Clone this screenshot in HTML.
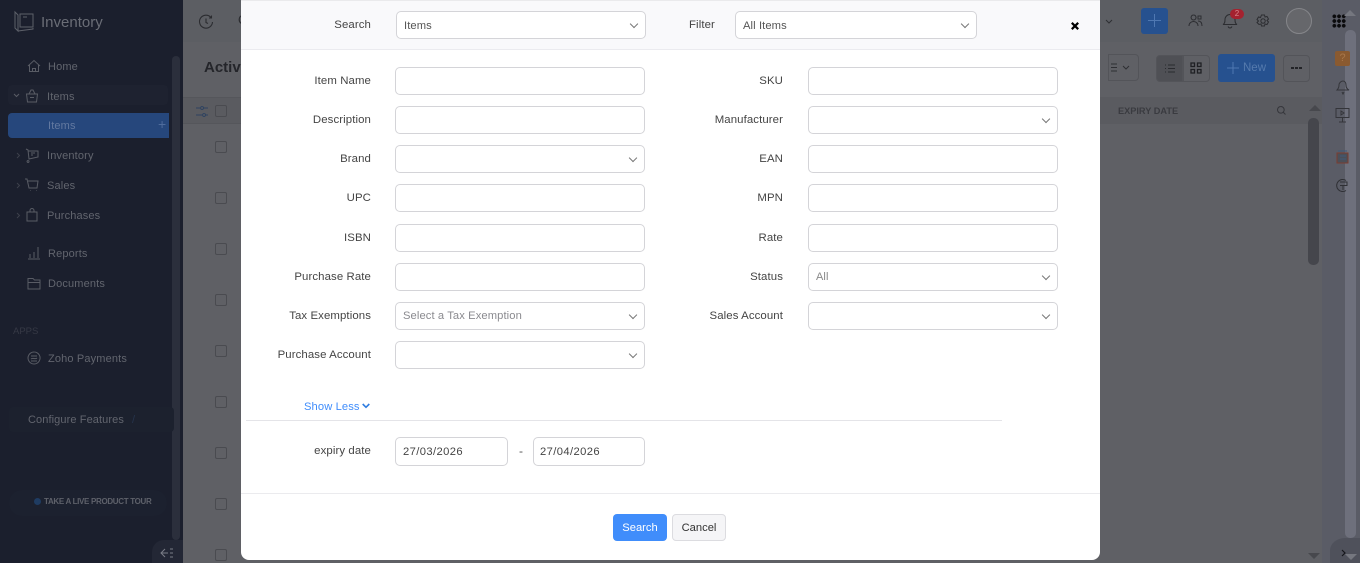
<!DOCTYPE html>
<html><head><meta charset="utf-8"><title>Inventory</title>
<style>
*{box-sizing:border-box}
html,body{margin:0;padding:0;width:1360px;height:563px;overflow:hidden;background:#5f6065;font-family:"Liberation Sans",sans-serif;font-size:12px}
.a{position:absolute}
.t{position:absolute;white-space:nowrap;line-height:14px}
.nav{color:#62656e;font-size:11px;letter-spacing:.15px;margin-top:1px}
.cb{position:absolute;left:215px;width:12px;height:12px;border:1px solid #4a4b50;border-radius:2px}
.lb{position:absolute;white-space:nowrap;text-align:right;color:#444;font-size:11.4px;line-height:14px;letter-spacing:.1px;margin-top:2px}
.l1{right:989px}.l2{right:577px}
.in{position:absolute;width:250px;height:28px;border:1px solid #d4d4d8;border-radius:5px;background:#fff;color:#555;font-size:11.2px;line-height:28px;padding-left:7px;letter-spacing:.1px}
.c1{left:395px}.c2{left:808px}
.sel:after{content:"";position:absolute;right:8px;top:9px;width:5px;height:5px;border-right:1.3px solid #777;border-bottom:1.3px solid #777;transform:rotate(45deg)}
svg{position:absolute;overflow:visible;fill:none}
</style></head><body>

<!-- background page -->
<div class="a" style="left:183px;top:0;width:1058px;height:42px;background:#5c5e63"></div>
<div class="a" style="left:1100px;top:0;width:230px;height:42px;background:#5c5e63"></div>
<div class="a" style="left:1322px;top:0;width:38px;height:563px;background:#5a5c66"></div>
<div class="a" style="left:1100px;top:97px;width:222px;height:27px;background:#5a5b60"></div>
<div class="a" style="left:183px;top:97px;width:58px;height:27px;background:#5a5b60"></div>

<!-- sidebar -->
<div class="a" style="left:0;top:0;width:183px;height:563px;background:#1b1f2d"></div>
<div class="a" style="left:172px;top:56px;width:8px;height:484px;background:#2b2f3c;border-radius:4px"></div>
<div class="a" style="left:8px;top:85px;width:160px;height:20px;background:#1e2230;border-radius:4px"></div>
<div class="a" style="left:8px;top:113px;width:161px;height:25px;background:#26477c;border-radius:4px 0 0 4px"></div>
<div class="a" style="left:9px;top:407px;width:165px;height:25px;background:#1c212e;border-radius:4px"></div>
<div class="a" style="left:9px;top:490px;width:158px;height:26px;background:#1c212f;border-radius:13px"></div>
<div class="a" style="left:152px;top:540px;width:31px;height:23px;background:#232735;border-radius:12px 0 0 0"></div>

<svg style="left:14px;top:11px" width="22" height="22" viewBox="0 0 22 22" stroke="#5d6069" stroke-width="1"><path d="M1 1l3 3v16l-3-3zM4 20l15-2v-1M6 3h13v13H6zM9 6h4"/></svg>
<div class="t" style="left:41px;top:14px;color:#6a6d76;font-size:15px;line-height:17px">Inventory</div>

<svg style="left:27px;top:59px" width="14" height="14" viewBox="0 0 14 14" stroke="#595c65"><path d="M1 7l6-5.500 6 5.500M2.500 6v6.500h9V6M5.500 12.500v-3h3v3"/></svg>
<div class="t nav" style="left:48px;top:59px">Home</div>
<svg style="left:13px;top:92px" width="7" height="7" viewBox="0 0 7 7" stroke="#595c65"><path d="M1 2l2.500 2.500L6 2"/></svg>
<svg style="left:25px;top:89px" width="14" height="14" viewBox="0 0 14 14" stroke="#595c65"><path d="M1.500 5h11l-1 8h-9zM4 5l2-4h2l2 4M5 8.500h4"/></svg>
<div class="t nav" style="left:47px;top:89px">Items</div>
<div class="t nav" style="left:48px;top:118px;color:#6379a0">Items</div>
<div class="t" style="left:158px;top:117px;color:#4f6c9c;font-size:14px">+</div>

<svg style="left:15px;top:152px" width="6" height="7" viewBox="0 0 6 7" stroke="#3d404b"><path d="M2 1l2.500 2.500L2 6"/></svg>
<svg style="left:25px;top:148px" width="14" height="14" viewBox="0 0 14 14" stroke="#595c65"><path d="M1 1l2 1 1 9 9-2V3H3M3 12.500a1 1 0 1 0 .1 0M6 5h4M6 7h2"/></svg>
<div class="t nav" style="left:47px;top:148px">Inventory</div>
<svg style="left:15px;top:182px" width="6" height="7" viewBox="0 0 6 7" stroke="#3d404b"><path d="M2 1l2.500 2.500L2 6"/></svg>
<svg style="left:25px;top:178px" width="14" height="14" viewBox="0 0 14 14" stroke="#595c65"><path d="M0 1h2l2 9h8l1-7H3M5 12.500h.5M11 12.500h.5"/></svg>
<div class="t nav" style="left:47px;top:178px">Sales</div>
<svg style="left:15px;top:212px" width="6" height="7" viewBox="0 0 6 7" stroke="#3d404b"><path d="M2 1l2.500 2.500L2 6"/></svg>
<svg style="left:25px;top:208px" width="14" height="14" viewBox="0 0 14 14" stroke="#595c65"><path d="M2 4h10v9H2zM5 4V2.500a2 2 0 0 1 4 0V4"/></svg>
<div class="t nav" style="left:47px;top:208px">Purchases</div>
<svg style="left:27px;top:246px" width="14" height="14" viewBox="0 0 14 14" stroke="#595c65"><path d="M1 13h12M3 12V8M7 12V6M11 12V1"/></svg>
<div class="t nav" style="left:48px;top:246px">Reports</div>
<svg style="left:27px;top:276px" width="14" height="14" viewBox="0 0 14 14" stroke="#595c65"><path d="M1 4V2.500h5L7.500 4H13v9H1zM1 6.500h12"/></svg>
<div class="t nav" style="left:48px;top:276px">Documents</div>
<div class="t" style="left:13px;top:325px;color:#363945;font-size:9.500px">APPS</div>
<svg style="left:27px;top:351px" width="14" height="14" viewBox="0 0 14 14" stroke="#595c65"><path d="M7 1a6 6 0 1 0 .1 0M4 5h6M4 8c2-2 4 1 6-1M4 10h6"/></svg>
<div class="t nav" style="left:48px;top:351px">Zoho Payments</div>
<div class="t nav" style="left:28px;top:412px;letter-spacing:.1px">Configure Features</div>
<div class="t" style="left:132px;top:413px;color:#26344d;font-size:11px">/</div>
<div class="a" style="left:34px;top:498px;width:7px;height:7px;border-radius:50%;background:#1f3c62"></div>
<div class="t" style="left:44px;top:495px;color:#5e616a;font-size:8px;font-weight:bold;letter-spacing:-.32px">TAKE A LIVE PRODUCT TOUR</div>
<svg style="left:160px;top:547px" width="14" height="12" viewBox="0 0 14 12" stroke="#7a7d86"><path d="M5 2L1 6l4 4M1 6h7M10 2h3M10 6h3M10 10h3"/></svg>

<!-- page behind modal left -->
<svg style="left:198px;top:14px" width="16" height="16" viewBox="0 0 16 16" stroke="#2b2c30" stroke-width="1.100"><path d="M13 3.500A6.500 6.500 0 1 0 14.500 8M13.500 1.500v2.500H11M8 4.500V8.500l2 1"/></svg>
<div class="t" style="left:238px;top:13px;color:#2b2c30;font-size:13px">Q</div>
<div class="t" style="left:204px;top:59px;color:#24252a;font-size:15px;font-weight:bold;line-height:18px">Active</div>
<svg style="left:196px;top:105px" width="12" height="13" viewBox="0 0 12 13" stroke="#2d4260"><path d="M0 3h4M8 3h4M0 10h6M10 10h2M6 1.500a1.500 1.500 0 1 0 .1 0M8 8.500a1.500 1.500 0 1 0 .1 0"/></svg>
<div class="cb" style="top:105px"></div>
<div class="a" style="left:183px;top:97px;width:58px;height:1px;background:#55565b"></div>
<div class="a" style="left:183px;top:123px;width:58px;height:1px;background:#55565b"></div>
<div class="cb" style="top:141px"></div><div class="cb" style="top:192px"></div><div class="cb" style="top:243px"></div><div class="cb" style="top:294px"></div><div class="cb" style="top:345px"></div><div class="cb" style="top:396px"></div><div class="cb" style="top:447px"></div><div class="cb" style="top:498px"></div><div class="cb" style="top:549px"></div>

<!-- page right of modal -->
<svg style="left:1105px;top:19px" width="8" height="6" viewBox="0 0 8 6" stroke="#2e2f33"><path d="M1 1l3 3 3-3"/></svg>
<div class="a" style="left:1141px;top:8px;width:27px;height:26px;background:#26518f;border-radius:3px"></div>
<svg style="left:1148px;top:14px" width="13" height="13" viewBox="0 0 13 13" stroke="#4f78b2"><path d="M6.500 0v13M0 6.500h13"/></svg>
<svg style="left:1188px;top:14px" width="15" height="14" viewBox="0 0 15 14" stroke="#2c2d31"><path d="M5.500 1a2.500 2.500 0 1 0 .1 0M1 12c0-6 9-6 9 0M10 2h3v3h-3zM10 7c2 0 4 1 4 5"/></svg>
<svg style="left:1222px;top:13px" width="16" height="16" viewBox="0 0 16 16" stroke="#2c2d31"><path d="M1 11.500c2-1 2-3 2-5a5 5 0 0 1 10 0c0 2 0 4 2 5zM6 13.500c1 2 3 2 4 0"/></svg>
<div class="a" style="left:1230px;top:9px;width:14px;height:10px;border-radius:5px;background:#a4222f;color:#d8868d;font-size:8px;line-height:10px;text-align:center">2</div>
<svg style="left:1256px;top:14px" width="14" height="14" viewBox="0 0 14 14" stroke="#2c2d31"><path d="M5.500 1h3l.5 2 2-.5 1.500 2.500-1.500 1.500 1.500 1.500-1.500 2.500-2-.5-.5 2h-3l-.5-2-2 .5L1 8.500 2.500 7 1 5.500 2.500 3l2 .5zM7 4.800a2.200 2.200 0 1 0 .1 0"/></svg>
<div class="a" style="left:1286px;top:8px;width:26px;height:26px;border-radius:50%;background:#66676b;border:1px solid #85868a"></div>
<div class="a" style="left:1332px;top:14px;width:14px;height:14px;background-image:radial-gradient(circle,#0b0b0d 1.800px,transparent 2px);background-size:4.700px 4.700px"></div>
<div class="a" style="left:1108px;top:54px;width:31px;height:27px;border:1px solid #535459;border-radius:0 4px 4px 0"></div>
<svg style="left:1110px;top:63px" width="25" height="9" viewBox="0 0 25 9" stroke="#2e2f33"><path d="M1 1h6M1 4.500h6M1 8h6M13 3l3 3 3-3"/></svg>
<div class="a" style="left:1156px;top:55px;width:27px;height:27px;background:#4f5055;border:1px solid #535459;border-radius:4px 0 0 4px"></div>
<svg style="left:1165px;top:64px" width="10" height="9" viewBox="0 0 10 9" stroke="#2a2b2f"><path d="M0 1h1M3 1h7M0 4.500h1M3 4.500h7M0 8h1M3 8h7"/></svg>
<div class="a" style="left:1183px;top:55px;width:27px;height:27px;background:#5f6065;border:1px solid #535459;border-radius:0 4px 4px 0"></div>
<svg style="left:1190px;top:62px" width="12" height="12" viewBox="0 0 12 12" stroke="#1f2024" stroke-width="1.300"><path d="M1 1h3.500v3.500H1zM7.500 1H11v3.500H7.500zM1 7.500h3.500V11H1zM7.500 7.500H11V11H7.500z"/></svg>
<div class="a" style="left:1218px;top:54px;width:57px;height:28px;background:#26518f;border-radius:3px"></div>
<svg style="left:1227px;top:62px" width="12" height="12" viewBox="0 0 12 12" stroke="#4f78b2"><path d="M6 0v12M0 6h12"/></svg>
<div class="t" style="left:1243px;top:61px;color:#557aad;font-size:11.500px">New</div>
<div class="a" style="left:1283px;top:55px;width:27px;height:27px;border:1px solid #535459;border-radius:4px"></div>
<div class="a" style="left:1291px;top:67px;width:3px;height:2px;background:#232428"></div><div class="a" style="left:1295px;top:67px;width:3px;height:2px;background:#232428"></div><div class="a" style="left:1299px;top:67px;width:3px;height:2px;background:#232428"></div>
<div class="t" style="left:1118px;top:104px;color:#3a3b40;font-size:9.200px;font-weight:bold">EXPIRY DATE</div>
<svg style="left:1277px;top:106px" width="9" height="9" viewBox="0 0 9 9" stroke="#35363b"><path d="M3.800.5a3.300 3.300 0 1 0 .1 0M6 6l2.500 2.500"/></svg>
<div class="a" style="left:1308px;top:118px;width:11px;height:147px;background:#45464c;border-radius:5px"></div>
<div class="a" style="left:1309px;top:105px;border:6px solid transparent;border-top:0;border-bottom:6px solid #47484d"></div>
<div class="a" style="left:1308px;top:553px;border:6px solid transparent;border-bottom:0;border-top:6px solid #47484d"></div>
<div class="a" style="left:1345px;top:30px;width:11px;height:508px;background:#6e707c;border-radius:5px"></div>
<div class="a" style="left:1344px;top:10px;border:6px solid transparent;border-top:0;border-bottom:6px solid #75777f"></div>
<div class="a" style="left:1330px;top:538px;width:30px;height:25px;background:#4f515b;border-radius:50% 0 0 0"></div>
<div class="a" style="left:1345px;top:554px;border:6px solid transparent;border-bottom:0;border-top:6px solid #75777f"></div>
<svg style="left:1341px;top:549px" width="6" height="8" viewBox="0 0 6 8" stroke="#15161a" stroke-width="1.200"><path d="M1 1l3 3-3 3"/></svg>
<div class="a" style="left:1335px;top:51px;width:15px;height:15px;background:#8a5a30;border-radius:2px;color:#a8774a;font-size:11px;line-height:15px;text-align:center">?</div>
<svg style="left:1336px;top:80px" width="14" height="15" viewBox="0 0 14 15" stroke="#34353a"><path d="M1 10c1-1 2-3 2-5s2-4 4-4 3 2 3 4 1 4 3 5zM6 12l1 2 1-2"/></svg>
<svg style="left:1335px;top:107px" width="15" height="16" viewBox="0 0 15 16" stroke="#34353a"><path d="M1 1.500h13v9H1zM7.500 10.500V15M4 15h7M6 4l3 2-3 2z"/></svg>
<svg style="left:1335px;top:149px" width="14" height="15" viewBox="0 0 14 15" stroke="#7b3d30"><path d="M2 4h11v10H2z" fill="#4b4f58"/><path d="M3 2h9M5 7h6M5 10h6" stroke="#3f5a7a"/></svg>
<svg style="left:1335px;top:178px" width="14" height="15" viewBox="0 0 14 15" stroke="#2f3035"><path d="M11 2.500A6 6 0 1 0 11 12.500M5 4h7v3.500H5M8 7.500V12"/></svg>

<!-- modal -->
<div class="a" style="left:241px;top:0;width:859px;height:560px;background:#fff;border-radius:0 0 8px 8px;overflow:hidden">
  <div class="a" style="left:0;top:0;width:859px;height:50px;background:#f9f9fb;border-bottom:1px solid #ebebef"></div>
  <div class="a" style="left:5px;top:420px;width:756px;height:1px;background:#e4e4e8"></div>
  <div class="a" style="left:0;top:493px;width:859px;height:1px;background:#ebebee"></div>
</div>
<div class="a" style="left:241px;top:0;width:859px;height:1px;background:#eaeaec"></div>

<div class="lb l1" style="top:16px">Search</div>
<div class="in c1 sel" style="left:396px;top:11px">Items</div>
<div class="lb" style="left:689px;top:16px">Filter</div>
<div class="in sel" style="left:735px;top:11px;width:242px">All Items</div>
<svg style="left:1071px;top:22px" width="8" height="8" viewBox="0 0 8 8" stroke="#000" stroke-width="2.200"><path d="M.8.800l6.400 6.400M7.200.800L.8 7.200"/></svg>

<div class="lb l1" style="top:72px">Item Name</div><div class="in c1" style="top:67px"></div>
<div class="lb l2" style="top:72px">SKU</div><div class="in c2" style="top:67px"></div>
<div class="lb l1" style="top:111px">Description</div><div class="in c1" style="top:106px"></div>
<div class="lb l2" style="top:111px">Manufacturer</div><div class="in c2 sel" style="top:106px"></div>
<div class="lb l1" style="top:150px">Brand</div><div class="in c1 sel" style="top:145px"></div>
<div class="lb l2" style="top:150px">EAN</div><div class="in c2" style="top:145px"></div>
<div class="lb l1" style="top:189px">UPC</div><div class="in c1" style="top:184px"></div>
<div class="lb l2" style="top:189px">MPN</div><div class="in c2" style="top:184px"></div>
<div class="lb l1" style="top:229px">ISBN</div><div class="in c1" style="top:224px"></div>
<div class="lb l2" style="top:229px">Rate</div><div class="in c2" style="top:224px"></div>
<div class="lb l1" style="top:268px">Purchase Rate</div><div class="in c1" style="top:263px"></div>
<div class="lb l2" style="top:268px">Status</div><div class="in c2 sel" style="top:263px;color:#888;font-size:11px;line-height:26px">All</div>
<div class="lb l1" style="top:307px">Tax Exemptions</div><div class="in c1 sel" style="top:302px;color:#8a8a8f;line-height:26px">Select a Tax Exemption</div>
<div class="lb l2" style="top:307px">Sales Account</div><div class="in c2 sel" style="top:302px"></div>
<div class="lb l1" style="top:346px">Purchase Account</div><div class="in c1 sel" style="top:341px"></div>

<div class="t" style="left:304px;top:400px;color:#408dfb;font-size:11.200px;letter-spacing:.1px">Show Less</div>
<svg style="left:362px;top:403px" width="8" height="6" viewBox="0 0 8 6" stroke="#2f7de0" stroke-width="1.600"><path d="M.7 1l3.300 3.300L7.300 1"/></svg>

<div class="lb l1" style="top:442px">expiry date</div>
<div class="in" style="left:395px;top:437px;width:113px;height:29px;line-height:28px;color:#444;letter-spacing:.4px">27/03/2026</div>
<div class="t" style="left:519px;top:444px;color:#555">-</div>
<div class="in" style="left:533px;top:437px;width:112px;height:29px;line-height:28px;padding-left:6px;color:#444;letter-spacing:.4px">27/04/2026</div>

<div class="a" style="left:613px;top:514px;width:54px;height:27px;background:#408dfb;border-radius:4px;color:#fff;font-size:11.200px;line-height:28px;text-align:center">Search</div>
<div class="a" style="left:672px;top:514px;width:54px;height:27px;background:#f5f5f7;border:1px solid #dcdce0;border-radius:4px;color:#333;font-size:11.200px;line-height:26px;text-align:center">Cancel</div>
</body></html>
